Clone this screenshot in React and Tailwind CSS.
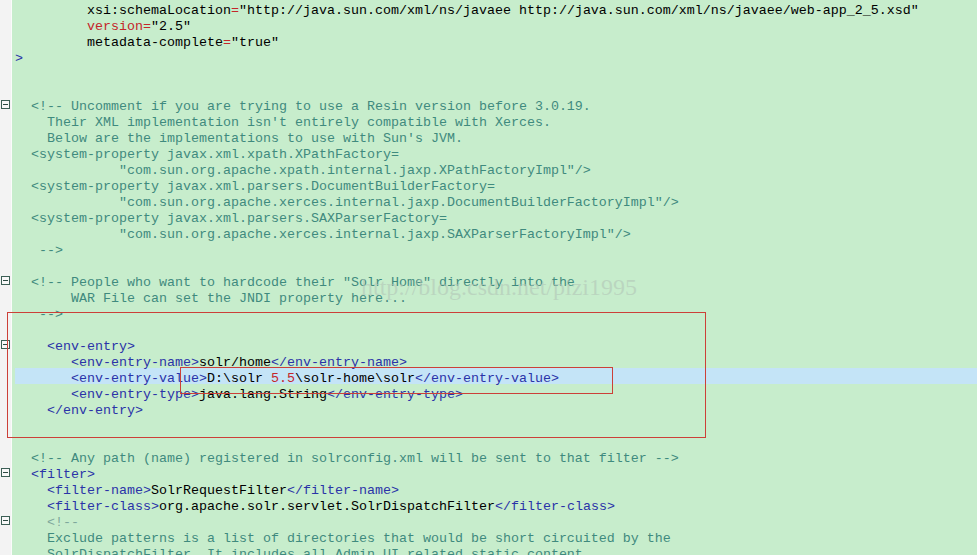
import React from 'react';

// colour classes for the xml highlighting
const tone = {
  c: 'text-[#3f8a7e]',
  t: 'text-[#2a33a8]',
  k: 'text-black',
  r: 'text-[#c4262a]',
  g: 'text-[#7fa89c]',
};

const lines = [
  { text: [['         xsi:schemaLocation', 'k'], ['=', 'r'], ['"http://java.sun.com/xml/ns/javaee http://java.sun.com/xml/ns/javaee/web-app_2_5.xsd"', 'k']] },
  { text: [['         version=', 'r'], ['"2.5"', 'k']] },
  { text: [['         metadata-complete', 'k'], ['=', 'r'], ['"true"', 'k']] },
  { text: [['>', 't']] },
  { text: [] },
  { text: [] },
  { fold: true, text: [['  <!-- Uncomment if you are trying to use a Resin version before 3.0.19.', 'c']] },
  { text: [["    Their XML implementation isn't entirely compatible with Xerces.", 'c']] },
  { text: [["    Below are the implementations to use with Sun's JVM.", 'c']] },
  { text: [['  <system-property javax.xml.xpath.XPathFactory=', 'c']] },
  { text: [['             "com.sun.org.apache.xpath.internal.jaxp.XPathFactoryImpl"/>', 'c']] },
  { text: [['  <system-property javax.xml.parsers.DocumentBuilderFactory=', 'c']] },
  { text: [['             "com.sun.org.apache.xerces.internal.jaxp.DocumentBuilderFactoryImpl"/>', 'c']] },
  { text: [['  <system-property javax.xml.parsers.SAXParserFactory=', 'c']] },
  { text: [['             "com.sun.org.apache.xerces.internal.jaxp.SAXParserFactoryImpl"/>', 'c']] },
  { text: [['   -->', 'c']] },
  { text: [] },
  { fold: true, text: [['  <!-- People who want to hardcode their "Solr Home" directly into the', 'c']] },
  { text: [['       WAR File can set the JNDI property here...', 'c']] },
  { text: [['   -->', 'c']] },
  { text: [] },
  { fold: true, text: [['    <env-entry>', 't']] },
  { text: [['       <env-entry-name>', 't'], ['solr/home', 'k'], ['</env-entry-name>', 't']] },
  { active: true, text: [['       <env-entry-value>', 't'], ['D:\\solr ', 'k'], ['5.5', 'r'], ['\\solr-home\\solr', 'k'], ['</env-entry-value>', 't']] },
  { text: [['       <env-entry-type>', 't'], ['java.lang.String', 'k'], ['</env-entry-type>', 't']] },
  { text: [['    </env-entry>', 't']] },
  { text: [] },
  { text: [] },
  { text: [['  <!-- Any path (name) registered in solrconfig.xml will be sent to that filter -->', 'c']] },
  { fold: true, text: [['  <filter>', 't']] },
  { text: [['    <filter-name>', 't'], ['SolrRequestFilter', 'k'], ['</filter-name>', 't']] },
  { text: [['    <filter-class>', 't'], ['org.apache.solr.servlet.SolrDispatchFilter', 'k'], ['</filter-class>', 't']] },
  { fold: true, text: [['    <!--', 'g']] },
  { text: [['    Exclude patterns is a list of directories that would be short circuited by the', 'c']] },
  { text: [['    SolrDispatchFilter. It includes all Admin UI related static content.', 'c']] },
];

const FoldBox = () => (
  <div className="ml-[1px] flex h-[9px] w-[9px] items-center justify-center border border-[#3c5f55] bg-[#f8f8f8]">
    <div className="h-px w-[5px] bg-[#2c4a42]" />
  </div>
);

const App = () => {
  return (
    <div className="relative flex h-[555px] w-[977px] overflow-hidden bg-[#c7edcc] font-['Liberation_Mono','Courier_New',monospace] text-[13.33px]">
      {/* gutter */}
      <div className="w-[12px] shrink-0 border-r border-[#fbfbfb] bg-[#f3f3f3]">
        {lines.map((line, i) => (
          <div key={i} className="flex h-4 items-center">
            {line.fold && <FoldBox />}
          </div>
        ))}
      </div>

      {/* code */}
      <div className="flex-1 pl-[3px]">
        {lines.map((line, i) => (
          <div key={i} className={line.active ? 'h-4 bg-[#c4e4f7]' : 'h-4'}>
            <div className="whitespace-pre leading-[22px]">
              {line.text.map(([s, c], j) => (
                <span key={j} className={tone[c]}>{s}</span>
              ))}
            </div>
          </div>
        ))}
      </div>

      {/* watermark */}
      <div className="pointer-events-none absolute left-[361px] top-[273px] font-['Liberation_Serif','Times_New_Roman',serif] text-[24px] leading-[28px] text-[#b2c6b7]/60">
        http://blog.csdn.net/pizi1995
      </div>

      {/* red annotation boxes */}
      <div className="pointer-events-none absolute left-[7px] top-[312px] h-[126px] w-[699px] border border-[#cc4038]" />
      <div className="pointer-events-none absolute left-[180px] top-[367px] h-[27px] w-[433px] border border-[#cc4038]" />
    </div>
  );
};

export default App;
